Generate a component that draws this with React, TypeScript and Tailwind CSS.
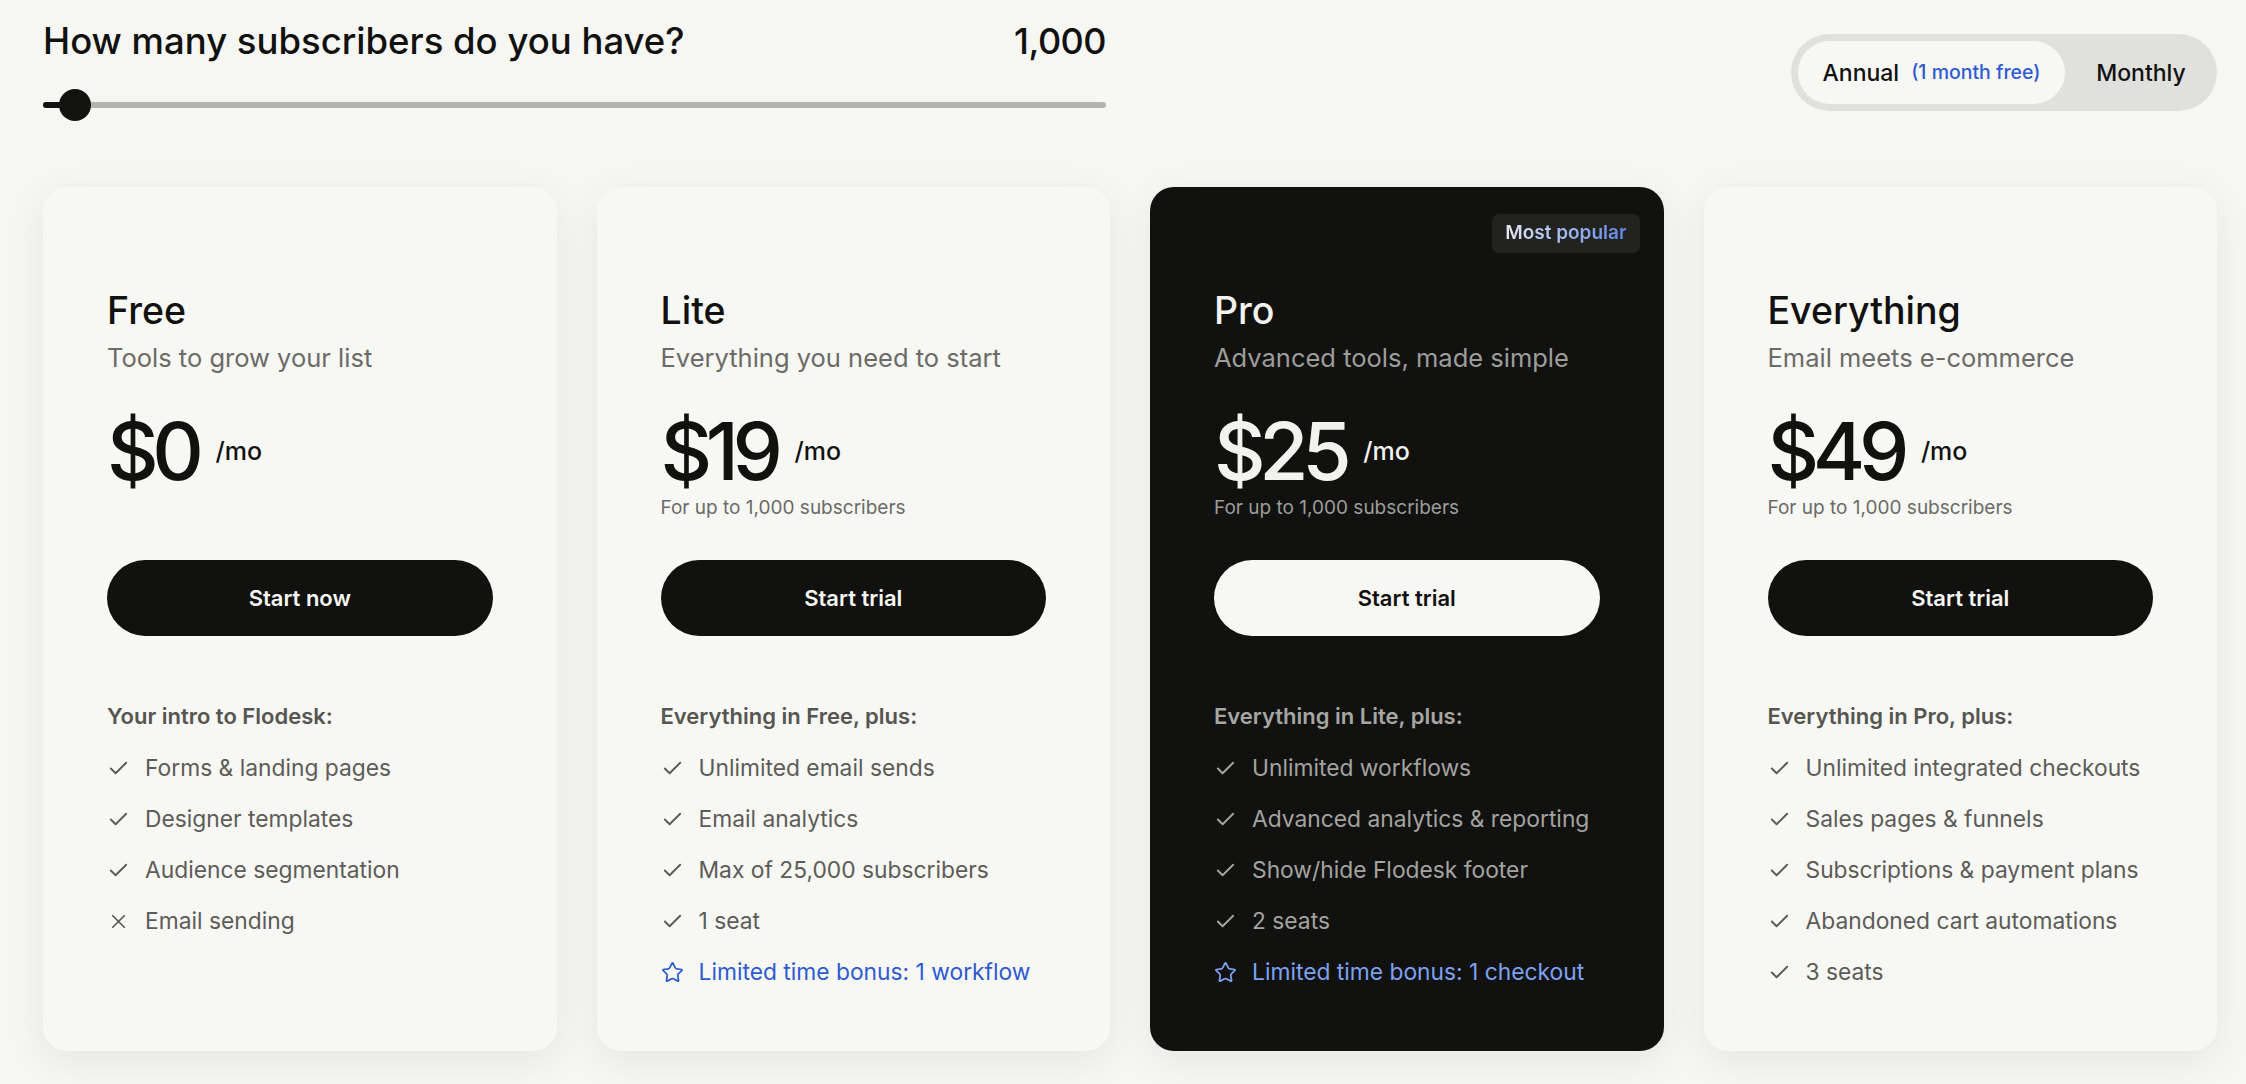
import { Check, Star, X } from "lucide-react";

type Feature = { text: string; kind?: "check" | "x" | "bonus" };

interface Plan {
    name: string;
    tagline: string;
    price: string;
    note?: string;
    cta: string;
    intro: string;
    features: Feature[];
    dark?: boolean;
    badge?: boolean;
}

const plans: Plan[] = [
    {
        name: "Free",
        tagline: "Tools to grow your list",
        price: "$0",
        cta: "Start now",
        intro: "Your intro to Flodesk:",
        features: [
            { text: "Forms & landing pages" },
            { text: "Designer templates" },
            { text: "Audience segmentation" },
            { text: "Email sending", kind: "x" },
        ],
    },
    {
        name: "Lite",
        tagline: "Everything you need to start",
        price: "$19",
        note: "For up to 1,000 subscribers",
        cta: "Start trial",
        intro: "Everything in Free, plus:",
        features: [
            { text: "Unlimited email sends" },
            { text: "Email analytics" },
            { text: "Max of 25,000 subscribers" },
            { text: "1 seat" },
            { text: "Limited time bonus: 1 workflow", kind: "bonus" },
        ],
    },
    {
        name: "Pro",
        tagline: "Advanced tools, made simple",
        price: "$25",
        note: "For up to 1,000 subscribers",
        cta: "Start trial",
        intro: "Everything in Lite, plus:",
        dark: true,
        badge: true,
        features: [
            { text: "Unlimited workflows" },
            { text: "Advanced analytics & reporting" },
            { text: "Show/hide Flodesk footer" },
            { text: "2 seats" },
            { text: "Limited time bonus: 1 checkout", kind: "bonus" },
        ],
    },
    {
        name: "Everything",
        tagline: "Email meets e-commerce",
        price: "$49",
        note: "For up to 1,000 subscribers",
        cta: "Start trial",
        intro: "Everything in Pro, plus:",
        features: [
            { text: "Unlimited integrated checkouts" },
            { text: "Sales pages & funnels" },
            { text: "Subscriptions & payment plans" },
            { text: "Abandoned cart automations" },
            { text: "3 seats" },
        ],
    },
];

function PlanCard({ plan }: { plan: Plan }) {
    const dark = plan.dark;
    return (
        <div
            className={`relative h-[864px] rounded-[24px] px-[64px] pt-[101px] shadow-[0_10px_40px_rgba(0,0,0,0.07)] ${dark ? "bg-[#111110]" : "bg-[#f7f7f3]"}`}>
            {plan.badge && (
                <div className="absolute top-[27px] right-[24px] h-[39px] px-[13px] rounded-[7px] bg-[#22221f] flex items-center">
                    <span className="text-[19px] font-semibold bg-gradient-to-r from-[#e3e8f4] to-[#5f86e8] bg-clip-text text-transparent">
                        Most popular
                    </span>
                </div>
            )}
            <h3 className={`text-[37.5px] leading-[46px] font-medium ${dark ? "text-[#f2f2ee]" : "text-[#111110]"}`}>
                {plan.name}
            </h3>
            <p className={`mt-[8px] text-[25.5px] leading-[32px] ${dark ? "text-[#9d9d99]" : "text-[#6b6b67]"}`}>
                {plan.tagline}
            </p>
            <div className="mt-[37px] flex items-start">
                <span className={`text-[80px] leading-[80px] font-medium tracking-[-0.08em] ${dark ? "text-[#f2f2ee]" : "text-[#111110]"}`}>
                    {plan.price}
                </span>
                <span className={`ml-[18px] mt-[25px] text-[25px] leading-[30px] font-medium ${dark ? "text-[#f2f2ee]" : "text-[#111110]"}`}>
                    /mo
                </span>
            </div>
            <p className={`mt-[5px] h-[24px] text-[19px] leading-[24px] ${dark ? "text-[#9d9d99]" : "text-[#6b6b67]"}`}>
                {plan.note}
            </p>
            <button
                className={`mt-[40px] w-full h-[76px] rounded-full text-[22px] font-semibold ${dark ? "bg-[#f7f7f3] text-[#111110]" : "bg-[#111110] text-[#f7f7f3]"}`}>
                {plan.cta}
            </button>
            <p className={`mt-[66px] text-[22px] leading-[28px] font-semibold ${dark ? "text-[#a6a6a2]" : "text-[#555551]"}`}>
                {plan.intro}
            </p>
            <ul className="mt-[24px] flex flex-col gap-[23px]">
                {plan.features.map((f) => {
                    const bonus = f.kind === "bonus";
                    const color = bonus
                        ? dark ? "text-[#7ea2f2]" : "text-[#2e5bd2]"
                        : dark ? "text-[#a3a39f]" : "text-[#5c5c58]";
                    return (
                        <li key={f.text} className={`flex items-center gap-[15px] h-[28px] text-[22.8px] leading-[28px] ${color}`}>
                            {f.kind === "x" ? (
                                <X className="w-[23px] h-[23px] shrink-0" strokeWidth={1.8} />
                            ) : bonus ? (
                                <Star className="w-[23px] h-[23px] shrink-0" strokeWidth={1.8} />
                            ) : (
                                <Check className="w-[23px] h-[23px] shrink-0" strokeWidth={2} />
                            )}
                            <span>{f.text}</span>
                        </li>
                    );
                })}
            </ul>
        </div>
    );
}

export default function App() {
    return (
        <div className="min-h-screen w-full bg-[#f6f6f3] pl-[43px] pr-[29px] pb-[40px] font-['Inter',sans-serif]">
            <div className="flex items-start justify-between">
                <div className="w-[1063px] pt-[19px]">
                    <div className="flex items-start justify-between text-[36.5px] leading-[44px] font-medium text-[#111110]">
                        <span>How many subscribers do you have?</span>
                        <span className="text-[36px] tracking-[-0.015em]">1,000</span>
                    </div>
                    <div className="relative mt-[26px] h-8 flex items-center">
                        <div className="w-full h-[6px] rounded-full bg-[#b3b3b1]" />
                        <div className="absolute left-0 w-[40px] h-[6px] rounded-full bg-[#121210]" />
                        <div className="absolute left-[16px] w-8 h-8 rounded-full bg-[#121210]" />
                    </div>
                </div>
                <div className="mt-[34px] w-[426px] h-[77px] rounded-full bg-[#e0e0dc] p-[7px] flex items-center">
                    <div className="w-[267px] h-[63px] rounded-full bg-[#f7f7f4] flex items-center justify-center gap-[12px] pt-[1px]">
                        <span className="text-[23px] font-medium text-[#111110]">Annual</span>
                        <span className="text-[19.5px] font-medium text-[#2e5bd2]">(1 month free)</span>
                    </div>
                    <span className="flex-1 pl-[7px] pt-[1px] text-center text-[23px] font-medium text-[#111110]">Monthly</span>
                </div>
            </div>
            <div className="mt-[66px] grid grid-cols-4 gap-[40px]">
                {plans.map((p) => (
                    <PlanCard key={p.name} plan={p} />
                ))}
            </div>
        </div>
    );
}
